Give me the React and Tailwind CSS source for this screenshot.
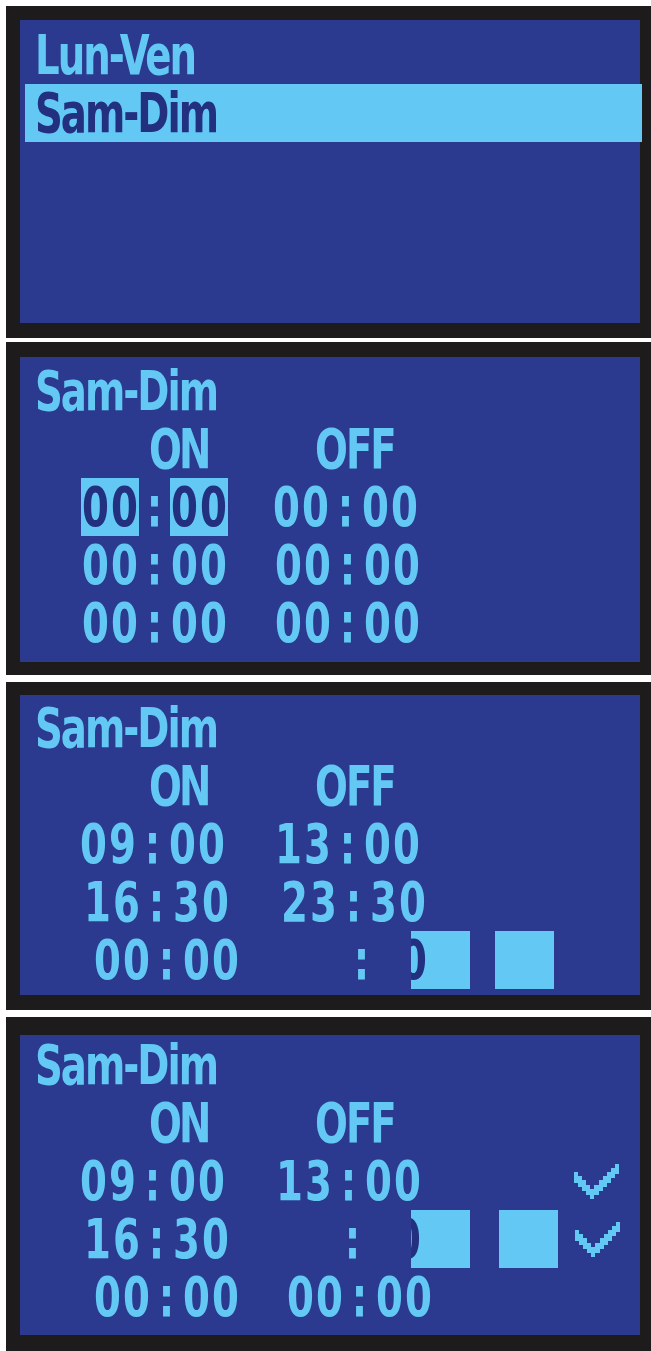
const CYAN = "#63c8f3";

const checkCells = [
  [0, 2], [1, 3], [2, 4], [3, 5], [4, 6],
  [5, 5], [6, 4], [7, 3], [8, 2], [9, 1], [10, 0],
];

function Check() {
  return (
    <svg width="47" height="35" viewBox="0 0 11 8.5" shapeRendering="crispEdges">
      {checkCells.map(([x, y]) => (
        <rect key={x} x={x} y={y} width="1" height="2.5" fill={CYAN} />
      ))}
    </svg>
  );
}

// the LCD font is tall and narrow: shrink the font, stretch it back up
function T({ className = "", children }) {
  return <span className={`inline-block scale-y-[1.28] ${className}`}>{children}</span>;
}

function Pair({ text, sel }) {
  return (
    <span
      className={`flex h-[58px] w-[58px] items-center justify-center ${
        sel ? "bg-[#63c8f3] text-[#22307f]" : ""
      }`}
    >
      <T className="tracking-[2px] pl-[2px]">{text}</T>
    </span>
  );
}

function Time({ value, sel }) {
  const [h, m] = value.split(":");
  return (
    <div className="flex items-center">
      <Pair text={h} sel={sel} />
      <T className="w-[31px] text-center">:</T>
      <Pair text={m} sel={sel} />
    </div>
  );
}

// cursor blocks left behind while the OFF field blinks
function Blocks({ colonMl, firstMl, secondMl, peek }) {
  return (
    <>
      <T className={`w-[31px] text-center ${colonMl}`}>:</T>
      <span className={`flex h-[58px] w-[59px] items-center overflow-hidden bg-[#63c8f3] text-[#22307f] ${firstMl}`}>
        <T className={peek}>0</T>
      </span>
      <span className={`h-[58px] w-[59px] bg-[#63c8f3] ${secondMl}`} />
    </>
  );
}

function Panel({ outer, inner, children }) {
  return (
    <div className={`ml-[6px] w-[659px] bg-[#1d1b1b] pl-[14px] ${outer}`}>
      <div className={`w-[620px] bg-[#2b3a8f] ${inner}`}>{children}</div>
    </div>
  );
}

function Line({ className = "", children }) {
  return <div className={`flex h-[58px] items-center ${className}`}>{children}</div>;
}

function Header() {
  return (
    <>
      <Line className="pl-[15px]">
        <T className="tracking-[-2px]">Sam-Dim</T>
      </Line>
      <Line className="pl-[129px]">
        <span className="w-[166px]">
          <T className="tracking-[-3px]">ON</T>
        </span>
        <T className="tracking-[-2px]">OFF</T>
      </Line>
    </>
  );
}

export default function App() {
  return (
    <div className="h-[1351px] w-[651px] overflow-hidden bg-white pt-[6px] font-['Liberation_Sans_Narrow','DejaVu_Sans_Condensed','Liberation_Sans',sans-serif] text-[43px] leading-none font-bold text-[#63c8f3]">
      <Panel outer="pt-[14px] pb-[15px]" inner="h-[303px] pt-[6px]">
        <Line className="pl-[15px]">
          <T className="tracking-[-2px]">Lun-Ven</T>
        </Line>
        <Line className="ml-[5px] w-[617px] bg-[#63c8f3] pl-[10px] text-[#22307f]">
          <T className="tracking-[-2px]">Sam-Dim</T>
        </Line>
      </Panel>

      <Panel outer="mt-[4px] pt-[15px] pb-[13px]" inner="h-[305px] pt-[5px]">
        <Header />
        <Line>
          <div className="ml-[61px]"><Time value="00:00" sel /></div>
          <div className="ml-[44px]"><Time value="00:00" /></div>
        </Line>
        <Line>
          <div className="ml-[61px]"><Time value="00:00" /></div>
          <div className="ml-[46px]"><Time value="00:00" /></div>
        </Line>
        <Line>
          <div className="ml-[61px]"><Time value="00:00" /></div>
          <div className="ml-[46px]"><Time value="00:00" /></div>
        </Line>
      </Panel>

      <Panel outer="mt-[7px] pt-[13px] pb-[15px]" inner="h-[300px] pt-[4px]">
        <Header />
        <Line>
          <div className="ml-[59px]"><Time value="09:00" /></div>
          <div className="ml-[48px]"><Time value="13:00" /></div>
        </Line>
        <Line>
          <div className="ml-[63px]"><Time value="16:30" /></div>
          <div className="ml-[50px]"><Time value="23:30" /></div>
        </Line>
        <Line>
          <div className="ml-[73px]"><Time value="00:00" /></div>
          <Blocks colonMl="ml-[106px]" firstMl="ml-[34px]" secondMl="ml-[25px]" peek="-ml-[11px]" />
        </Line>
      </Panel>

      <Panel outer="mt-[7px] pt-[18px] pb-[16px]" inner="h-[300px] pt-[1px]">
        <Header />
        <Line>
          <div className="ml-[59px]"><Time value="09:00" /></div>
          <div className="ml-[49px]"><Time value="13:00" /></div>
          <span className="ml-[151px]"><Check /></span>
        </Line>
        <Line>
          <div className="ml-[63px]"><Time value="16:30" /></div>
          <Blocks colonMl="ml-[107px]" firstMl="ml-[43px]" secondMl="ml-[29px]" peek="-ml-[17px]" />
          <span className="ml-[16px]"><Check /></span>
        </Line>
        <Line>
          <div className="ml-[73px]"><Time value="00:00" /></div>
          <div className="ml-[46px]"><Time value="00:00" /></div>
        </Line>
      </Panel>
    </div>
  );
}
